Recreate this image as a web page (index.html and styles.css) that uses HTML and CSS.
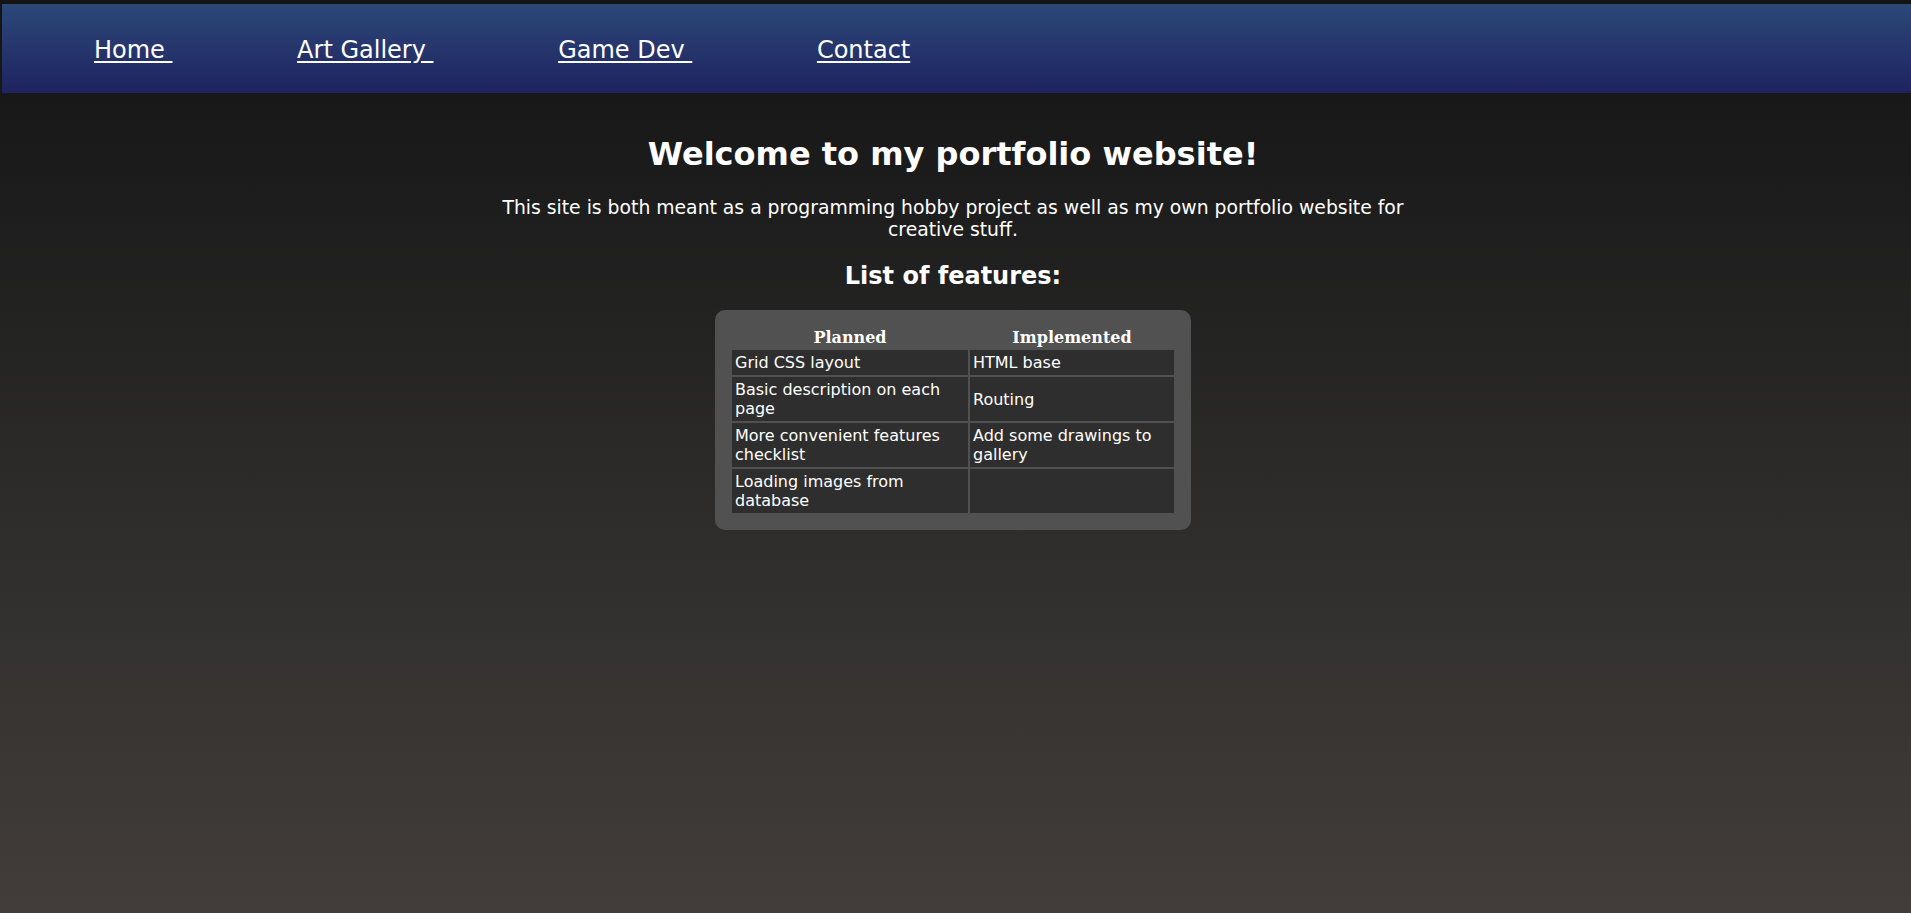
FILE: index.html
```html
<!DOCTYPE html>
<html lang="en">
<head>
<meta charset="utf-8">
<title>Portfolio</title>
<link rel="stylesheet" href="styles.css">
</head>
<body>
<nav class="topnav">
  <a class="navlink" href="#">Home&nbsp;</a>
  <a class="navlink" href="#">Art Gallery&nbsp;</a>
  <a class="navlink" href="#">Game Dev&nbsp;</a>
  <a class="navlink" href="#">Contact</a>
</nav>
<main class="content">
  <h1 class="title">Welcome to my portfolio website!</h1>
  <p class="intro">This site is both meant as a programming hobby project as well as my own portfolio website for creative stuff.</p>
  <h2 class="subtitle">List of features:</h2>
  <div class="features-box">
    <table class="features">
      <thead>
        <tr><th class="col-planned">Planned</th><th class="col-impl">Implemented</th></tr>
      </thead>
      <tbody>
        <tr><td>Grid CSS layout</td><td>HTML base</td></tr>
        <tr><td>Basic description on each page</td><td>Routing</td></tr>
        <tr><td>More convenient features checklist</td><td>Add some drawings to gallery</td></tr>
        <tr><td>Loading images from database</td><td></td></tr>
      </tbody>
    </table>
  </div>
</main>
</body>
</html>
```

FILE: styles.css
```css
html {
  min-height: 100%;
  background: linear-gradient(#141414 0%, #1c1c1c 20%, #2d2c2b 55%, #423d3a 100%);
  background-attachment: fixed;
}

body {
  margin: 4px 0 0 2px;
  font-family: "DejaVu Sans", Verdana, sans-serif;
  color: #ffffff;
}

.topnav {
  height: 89px;
  box-sizing: border-box;
  padding-top: 2px;
  display: flex;
  align-items: center;
  gap: 124.6px;
  padding-left: 92px;
  background: linear-gradient(#2c4878, #1f2360);
}

.navlink {
  color: #ffffff;
  font-size: 24px;
  text-decoration: underline;
  text-underline-offset: 3px;
}

.content {
  padding: 21px 7px 0 0;
  display: flex;
  flex-direction: column;
  align-items: center;
  text-align: center;
}

.title {
  font-size: 32px;
  font-weight: bold;
  margin: 21px 0 24px;
}

.intro {
  width: 940px;
  font-size: 18.8px;
  line-height: 22px;
  margin: 0;
}

.subtitle {
  font-size: 24px;
  margin: 21px 0 20px;
}

.features-box {
  background: #515151;
  border-radius: 10px;
  padding: 15px;
}

.features {
  table-layout: fixed;
  width: 446px;
  border-spacing: 2px;
  text-align: left;
}

.features th {
  font-family: "DejaVu Serif", Georgia, serif;
  font-weight: bold;
  font-size: 16px;
  line-height: 17px;
  padding: 2px 3px;
  text-align: center;
}

.col-planned {
  width: 236px;
  box-sizing: border-box;
}

.features td {
  background: #2e2e2e;
  font-size: 16px;
  line-height: 19px;
  padding: 3px 3px;
  vertical-align: middle;
}
```
